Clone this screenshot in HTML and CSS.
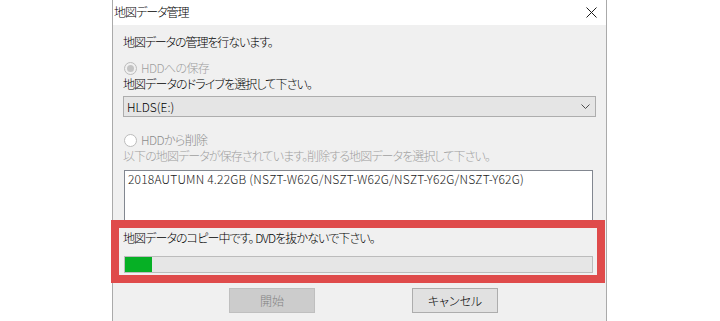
FILE: index.html
```html
<!DOCTYPE HTML>
<html>
<head>
  <title>地図データ管理</title>
  <link rel="stylesheet" href="styles.css">
</head>
<body>
  <div class="window">
    <div class="titlebar">
      <span class="title">地図データ管理</span>
      <svg class="close" width="11" height="11" viewBox="0 0 11 11">
        <path d="M0.5 0.5 L10.5 10.5 M10.5 0.5 L0.5 10.5" stroke="#1a1a1a" stroke-width="1" fill="none"/>
      </svg>
    </div>
    <div class="content">
      <p class="line intro">地図データの管理を行ないます。</p>

      <!-- 保存先 -->
      <label class="radio disabled">
        <span class="radio-dot checked"></span>HDDへの保存
      </label>
      <p class="line">地図データのドライブを選択して下さい。</p>
      <div class="combo">
        <span>HLDS(E:)</span>
        <svg width="9" height="5" viewBox="0 0 9 5">
          <path d="M0.5 0.5 L4.5 4.5 L8.5 0.5" stroke="#4d4d4d" stroke-width="1" fill="none"/>
        </svg>
      </div>

      <!-- 削除 -->
      <label class="radio delete">
        <span class="radio-dot"></span>HDDから削除
      </label>
      <p class="line muted">以下の地図データが保存されています。削除する地図データを選択して下さい。</p>
      <div class="listbox">
        <div class="list-item">2018AUTUMN 4.22GB (NSZT-W62G/NSZT-W62G/NSZT-Y62G/NSZT-Y62G)</div>
      </div>

      <!-- 進行状況 -->
      <div class="progress-box">
        <p class="line">地図データのコピー中です。 DVDを抜かないで下さい。</p>
        <div class="progress">
          <div class="progress-fill" style="width: 27px"></div>
        </div>
      </div>

      <div class="buttons">
        <button class="btn" disabled>開始</button>
        <button class="btn">キャンセル</button>
      </div>
    </div>
  </div>
</body>
</html>
```

FILE: styles.css
```css
body {
  margin: 0;
  background-color: #ffffff;
  font-family: "Noto Sans CJK JP", "Noto Sans", sans-serif;
  font-size: 12px;
  font-weight: 300;
  font-feature-settings: "palt";
  color: #000000;
  overflow: hidden;
}

.window {
  margin-left: 112px;
  width: 493px;
  height: 321px;
  border-left: 1px solid #aaaaaa;
  border-right: 1px solid #aaaaaa;
  background-color: #f0f0f0;
}

.titlebar {
  height: 25px;
  background-color: #ffffff;
  display: flex;
  align-items: center;
  justify-content: space-between;
  padding: 0 9px 0 1px;
}

.title {
  line-height: 16px;
  margin-top: -1px;
  letter-spacing: -1px;
}

.close {
  margin-top: -1px;
}

.content {
  padding: 9px 10px 0 10px;
}

.line {
  margin: 0;
  line-height: 16px;
  white-space: nowrap;
  letter-spacing: -0.9px;
}

.intro {
  letter-spacing: -1.1px;
  margin-bottom: 10px;
}

.muted {
  color: #a0a0a0;
}

.radio {
  display: flex;
  align-items: center;
  height: 16px;
  line-height: 16px;
  padding-left: 1px;
  letter-spacing: -0.6px;
}

.radio.disabled {
  color: #a0a0a0;
}

.radio.delete {
  color: #8c8c8c;
  margin-top: 15px;
}

.radio-dot {
  width: 11px;
  height: 11px;
  border: 1px solid #bcbcbc;
  border-radius: 50%;
  background-color: #ffffff;
  margin-right: 4px;
  display: flex;
  align-items: center;
  justify-content: center;
}

.radio-dot.checked {
  background-color: #f0f0f0;
}

.radio-dot.checked::after {
  content: "";
  width: 7px;
  height: 7px;
  border-radius: 50%;
  background-color: #c4c4c4;
}

.combo {
  margin-top: 4px;
  height: 19px;
  border: 1px solid #adadad;
  background-color: #e5e5e5;
  display: flex;
  align-items: center;
  justify-content: space-between;
  padding: 0 5px 0 3px;
}

.combo span {
  line-height: 16px;
}

.listbox {
  margin: 6px 3px 0 1px;
  height: 54px;
  border: 1px solid #828790;
  background-color: #ffffff;
  padding: 0 3px;
}

.list-item {
  line-height: 16px;
  color: #222222;
  white-space: nowrap;
  letter-spacing: 0.2px;
}

/* 赤枠の部分 */
.progress-box {
  position: relative;
  margin: -6px -9px 0 -12px;
  border: 8px solid #df4b4b;
  background-color: #f0f0f0;
  padding: 2px 4px 2px 4px;
}

.progress {
  margin: 10px 0 0 1px;
  height: 15px;
  border: 1px solid #bcbcbc;
  background-color: #e6e6e6;
}

.progress-fill {
  height: 100%;
  background-color: #06b025;
}

.buttons {
  display: flex;
  gap: 97px;
  margin: 5px 0 0 106px;
}

.btn {
  width: 86px;
  height: 25px;
  border: 1px solid #adadad;
  background-color: #e1e1e1;
  font-family: inherit;
  font-size: 12px;
  font-weight: 300;
  font-feature-settings: "palt";
  color: #000000;
  padding: 0;
}

.btn:disabled {
  background-color: #cccccc;
  border-color: #bfbfbf;
  color: #838383;
}
```
